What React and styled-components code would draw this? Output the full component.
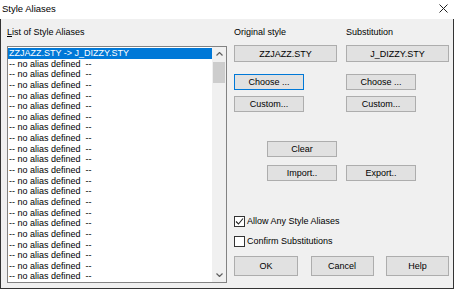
import React, { useState } from 'react';
import styled, { createGlobalStyle } from 'styled-components';

const GlobalStyle = createGlobalStyle`
  html, body {
    margin: 0;
    padding: 0;
    background: #f0f0f0;
  }
  body {
    font-family: "Liberation Sans", Arial, sans-serif;
    font-size: 9px;
    color: #000;
  }
`;

const aliases = [
  'ZZJAZZ.STY -> J_DIZZY.STY',
  ...Array.from({ length: 21 }, () => '-- no alias defined  --')
];

function App() {
  const [selected, setSelected] = useState(0);
  const [allowAny, setAllowAny] = useState(true);
  const [confirm, setConfirm] = useState(false);

  return (
    <>
      <GlobalStyle />
      <Window>
        <TitleBar>
          <span>Style Aliases</span>
          <CloseButton aria-label="Close">
            <svg width="9" height="9" viewBox="0 0 9 9">
              <path d="M0.5 0.5 L8.5 8.5 M8.5 0.5 L0.5 8.5" stroke="#222" strokeWidth="1" />
            </svg>
          </CloseButton>
        </TitleBar>
        <Body>
          <LeftCol>
            <Label>
              <u>L</u>ist of Style Aliases
            </Label>
            <ListBox>
              <Rows>
                {aliases.map((text, i) => (
                  <Row key={i} $selected={i === selected} onClick={() => setSelected(i)}>
                    {text}
                  </Row>
                ))}
              </Rows>
              <ScrollBar>
                <Arrow>
                  <svg width="7" height="4" viewBox="0 0 7 4">
                    <path d="M0.5 3.5 L3.5 0.5 L6.5 3.5" fill="none" stroke="#606060" strokeWidth="1.2" />
                  </svg>
                </Arrow>
                <Track>
                  <Thumb />
                </Track>
                <Arrow>
                  <svg width="7" height="4" viewBox="0 0 7 4">
                    <path d="M0.5 0.5 L3.5 3.5 L6.5 0.5" fill="none" stroke="#606060" strokeWidth="1.2" />
                  </svg>
                </Arrow>
              </ScrollBar>
            </ListBox>
          </LeftCol>

          <RightCol>
            <Grid>
              <ColLabel>Original style</ColLabel>
              <ColLabel>Substitution</ColLabel>

              <Button $h={17} $top={7}>ZZJAZZ.STY</Button>
              <Button $h={17} $top={7}>J_DIZZY.STY</Button>

              <Button $w={70} $top={12} $focused>Choose ...</Button>
              <Button $w={70} $top={12}>Choose ...</Button>

              <Button $w={70} $top={6}>Custom...</Button>
              <Button $w={70} $top={6}>Custom...</Button>

              <Button $w={70} $top={29} $end>Clear</Button>
              <span />

              <Button $w={70} $top={8} $end>Import..</Button>
              <Button $w={70} $top={8}>Export..</Button>
            </Grid>

            <Checks>
              <CheckRow onClick={() => setAllowAny(!allowAny)}>
                <Box>
                  {allowAny && (
                    <svg width="9" height="9" viewBox="0 0 9 9">
                      <path d="M1 4.5 L3.5 7 L8 1.5" fill="none" stroke="#222" strokeWidth="1.1" />
                    </svg>
                  )}
                </Box>
                Allow Any Style Aliases
              </CheckRow>
              <CheckRow onClick={() => setConfirm(!confirm)}>
                <Box>
                  {confirm && (
                    <svg width="9" height="9" viewBox="0 0 9 9">
                      <path d="M1 4.5 L3.5 7 L8 1.5" fill="none" stroke="#222" strokeWidth="1.1" />
                    </svg>
                  )}
                </Box>
                Confirm Substitutions
              </CheckRow>
            </Checks>

            <Footer>
              <Button $w={64} $h={20}>OK</Button>
              <Button $w={63} $h={20}>Cancel</Button>
              <Button $w={63} $h={20}>Help</Button>
            </Footer>
          </RightCol>
        </Body>
      </Window>
    </>
  );
}

export default App;

// style
const Window = styled.div`
  width: 454px;
  height: 289px;
  display: flex;
  flex-direction: column;
  box-sizing: border-box;
  background: #f0f0f0;
`;

const TitleBar = styled.div`
  height: 19px;
  flex: none;
  background: #fff;
  display: flex;
  align-items: center;
  justify-content: space-between;
  padding: 0 6px 3px 2px;
  box-sizing: border-box;
  font-size: 9.5px;
`;

const CloseButton = styled.div`
  width: 9px;
  height: 9px;
  display: flex;
`;

const Body = styled.div`
  flex: 1;
  display: flex;
  padding: 0 3px 0 6px;
  border: 1px solid #333;
  border-top: none;
  box-sizing: border-box;
`;

const LeftCol = styled.div`
  width: 220px;
  display: flex;
  flex-direction: column;
`;

const Label = styled.div`
  line-height: 12px;
  padding-top: 7px;
  margin-bottom: 8px;
  white-space: nowrap;
`;

const ListBox = styled.div`
  height: 237px;
  border: 1px solid #828282;
  background: #fff;
  display: flex;
  box-sizing: border-box;
  overflow: hidden;
`;

const Rows = styled.div`
  flex: 1;
  padding-top: 1px;
  overflow: hidden;
`;

const Row = styled.div`
  height: 10.65px;
  line-height: 10.65px;
  padding-left: 1px;
  white-space: pre;
  color: ${(p) => (p.$selected ? '#fff' : '#000')};
  background: ${(p) => (p.$selected ? '#0078d7' : 'transparent')};
  cursor: default;
`;

const ScrollBar = styled.div`
  width: 14px;
  flex: none;
  background: #f0f0f0;
  display: flex;
  flex-direction: column;
`;

const Arrow = styled.div`
  height: 14px;
  display: flex;
  align-items: center;
  justify-content: center;
`;

const Track = styled.div`
  flex: 1;
  padding: 1px 1px 0 1px;
`;

const Thumb = styled.div`
  height: 21px;
  background: #cdcdcd;
`;

const RightCol = styled.div`
  margin-left: 7px;
  width: 215px;
  display: flex;
  flex-direction: column;
`;

const Grid = styled.div`
  display: grid;
  grid-template-columns: 103px 103px;
  column-gap: 9px;
  align-items: start;
`;

const ColLabel = styled.div`
  line-height: 12px;
  padding-top: 7px;
  white-space: nowrap;
`;

const Button = styled.button`
  font-family: "Liberation Sans", Arial, sans-serif;
  font-size: 9px;
  color: #000;
  background: #e1e1e1;
  border: 1px solid ${(p) => (p.$focused ? '#0078d7' : '#adadad')};
  box-sizing: border-box;
  padding: 0;
  margin: ${(p) => p.$top || 0}px 0 0 0;
  width: ${(p) => (p.$w ? `${p.$w}px` : '100%')};
  height: ${(p) => p.$h || 16}px;
  justify-self: ${(p) => (p.$end ? 'end' : 'start')};
  white-space: nowrap;
  cursor: default;
`;

const Checks = styled.div`
  margin-top: 34px;
  display: flex;
  flex-direction: column;
  gap: 8px;
`;

const CheckRow = styled.label`
  display: flex;
  align-items: center;
  gap: 2px;
  height: 12px;
  line-height: 12px;
  white-space: nowrap;
`;

const Box = styled.span`
  width: 11px;
  height: 11px;
  box-sizing: border-box;
  border: 1px solid #333;
  background: #fff;
  display: flex;
  align-items: center;
  justify-content: center;
`;

const Footer = styled.div`
  margin-top: 9px;
  display: flex;
  justify-content: space-between;
`;
